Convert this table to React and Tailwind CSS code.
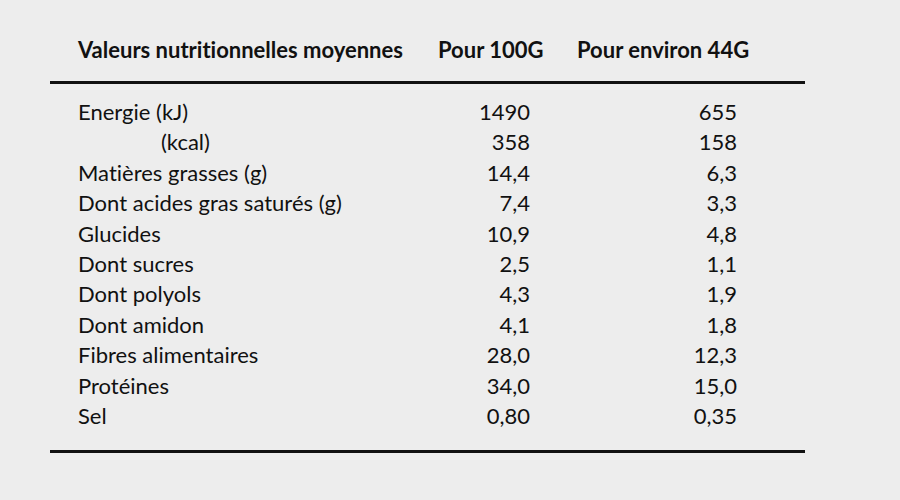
import React from "react";

const rows = [
  ["Energie (kJ)", "1490", "655"],
  ["(kcal)", "358", "158", true],
  ["Matières grasses (g)", "14,4", "6,3"],
  ["Dont acides gras saturés (g)", "7,4", "3,3"],
  ["Glucides", "10,9", "4,8"],
  ["Dont sucres", "2,5", "1,1"],
  ["Dont polyols", "4,3", "1,9"],
  ["Dont amidon", "4,1", "1,8"],
  ["Fibres alimentaires", "28,0", "12,3"],
  ["Protéines", "34,0", "15,0"],
  ["Sel", "0,80", "0,35"],
];

export default function App() {
  return (
    <div
      className="w-[900px] h-[500px] bg-[#ededed] text-[#111] pt-[37px] pl-[50px] [font-variant-ligatures:none]"
      style={{ fontFamily: "Lato, 'Noto Sans', sans-serif" }}
    >
      <div className="w-[755px]">
        <div className="flex pl-[28px] font-bold text-[22px] leading-[26px] whitespace-nowrap">
          <div className="w-[360px]">Valeurs nutritionnelles moyennes</div>
          <div className="w-[139px]">Pour 100G</div>
          <div>Pour environ 44G</div>
        </div>
        <div className="mt-[18px] h-[3px] bg-[#111]" />
        <div className="mt-[13px] pl-[28px] text-[22px] leading-[30.4px]">
          {rows.map(([label, a, b, indent]) => (
            <div key={label} className="grid grid-cols-[360px_92px_207px] whitespace-nowrap">
              <div className={indent ? "pl-[83px]" : ""}>{label}</div>
              <div className="text-right">{a}</div>
              <div className="text-right">{b}</div>
            </div>
          ))}
        </div>
        <div className="mt-[19px] h-[3px] bg-[#111]" />
      </div>
    </div>
  );
}
